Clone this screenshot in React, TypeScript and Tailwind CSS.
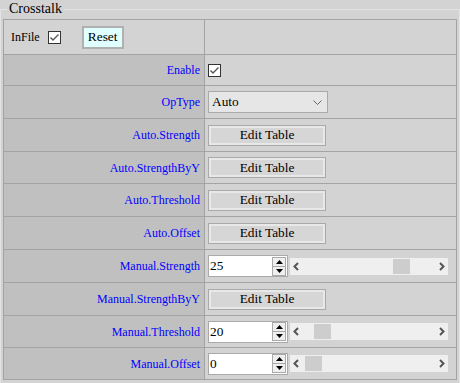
import React from 'react';

const Check = () => (
  <span className="inline-flex w-[13px] h-[13px] border border-[#333333] bg-white items-center justify-center">
    <svg width="11" height="11" viewBox="0 0 11 11">
      <polyline points="1.5,5.5 4,8 9.5,2.5" fill="none" stroke="#555555" strokeWidth="1.4" />
    </svg>
  </span>
);

const EditTable = () => (
  <button className="w-[118px] h-[21px] border border-[#a9a9a9] bg-[#d6d6d6] shadow-[inset_0_0_0_2px_#e8e8e8] text-[13.33px] text-black leading-none">
    Edit Table
  </button>
);

const Spinner = () => (
  <div className="flex flex-col w-[14px] h-[19px] border border-[#a9a9a9] bg-[#efefef]">
    <div className="flex-1 flex items-center justify-center border-b border-[#a9a9a9]">
      <svg width="7" height="4" viewBox="0 0 7 4"><polygon points="0,4 7,4 3.5,0" fill="#000" /></svg>
    </div>
    <div className="flex-1 flex items-center justify-center">
      <svg width="7" height="4" viewBox="0 0 7 4"><polygon points="0,0 7,0 3.5,4" fill="#000" /></svg>
    </div>
  </div>
);

const Slider = ({ value, thumb }: { value: string; thumb: number }) => (
  <div className="flex items-center gap-[2px]">
    <div className="flex items-center w-[80px] h-[22px] border border-[#a9a9a9] bg-white pl-[1px] pr-[1px]">
      <span className="flex-1 text-[13.33px] text-black leading-none">{value}</span>
      <Spinner />
    </div>
    <div className="relative flex items-center justify-between w-[158px] h-[17px] bg-[#efefef] px-[3px]">
      <svg width="6" height="9" viewBox="0 0 6 9"><polyline points="5,1 1.5,4.5 5,8" fill="none" stroke="#555" strokeWidth="2" /></svg>
      <div className="absolute top-[1px] h-[15px] w-[17px] bg-[#cdcdcd]" style={{ left: thumb }} />
      <svg width="6" height="9" viewBox="0 0 6 9"><polyline points="1,1 4.5,4.5 1,8" fill="none" stroke="#555" strokeWidth="2" /></svg>
    </div>
  </div>
);

const rows: { label: string; h: string; cell: React.ReactNode }[] = [
  { label: 'Enable', h: 'h-[31px]', cell: <Check /> },
  {
    label: 'OpType',
    h: 'h-[33px]',
    cell: (
      <div className="flex items-center justify-between w-[120px] h-[22px] border border-[#a9a9a9] bg-[#e6e6e6] pl-[3px] pr-[5px]">
        <span className="text-[13.33px] text-black leading-none">Auto</span>
        <svg width="9" height="5" viewBox="0 0 9 5"><polyline points="0.5,0.5 4.5,4.5 8.5,0.5" fill="none" stroke="#666" strokeWidth="1" /></svg>
      </div>
    ),
  },
  { label: 'Auto.Strength', h: 'h-[33px]', cell: <EditTable /> },
  { label: 'Auto.StrengthByY', h: 'h-[32px]', cell: <EditTable /> },
  { label: 'Auto.Threshold', h: 'h-[33px]', cell: <EditTable /> },
  { label: 'Auto.Offset', h: 'h-[33px]', cell: <EditTable /> },
  { label: 'Manual.Strength', h: 'h-[33px]', cell: <Slider value="25" thumb={103} /> },
  { label: 'Manual.StrengthByY', h: 'h-[33px]', cell: <EditTable /> },
  { label: 'Manual.Threshold', h: 'h-[32px]', cell: <Slider value="20" thumb={24} /> },
  { label: 'Manual.Offset', h: 'h-[32px]', cell: <Slider value="0" thumb={15} /> },
];

export default function App() {
  return (
    <div className="w-[460px] h-[383px] bg-[#d3d3d3] font-[Liberation_Serif,Times_New_Roman,serif] overflow-hidden">
      <fieldset className="border border-[#e3e3e3] px-[2px] pb-[2px] h-[390px]">
        <legend className="ml-[4px] px-[2px] text-[14px] leading-[18px] text-black">Crosstalk</legend>
        <div className="mt-[1px] border border-[#a3a3a3] border-b-0">
          <div className="flex h-[35px] border-b border-[#a3a3a3]">
            <div className="w-[201px] border-r border-[#a3a3a3] flex items-center pl-[7px]">
              <span className="text-[12px] text-black">InFile</span>
              <span className="ml-[8px] mt-[1px]"><Check /></span>
              <button className="ml-[21px] w-[42px] h-[23px] border-2 border-[#b0b0b0] bg-[#e0ffff] text-[13.33px] text-black leading-none">
                Reset
              </button>
            </div>
            <div className="flex-1" />
          </div>
          {rows.map((r) => (
            <div key={r.label} className={`flex ${r.h} border-b border-[#a3a3a3]`}>
              <div className="w-[201px] border-r border-[#a3a3a3] bg-[#c0c0c0] flex items-center justify-end pr-[4px]">
                <span className="text-[12px] text-[#0000ff]">{r.label}</span>
              </div>
              <div className="flex-1 flex items-center pl-[3px]">{r.cell}</div>
            </div>
          ))}
        </div>
      </fieldset>
    </div>
  );
}
